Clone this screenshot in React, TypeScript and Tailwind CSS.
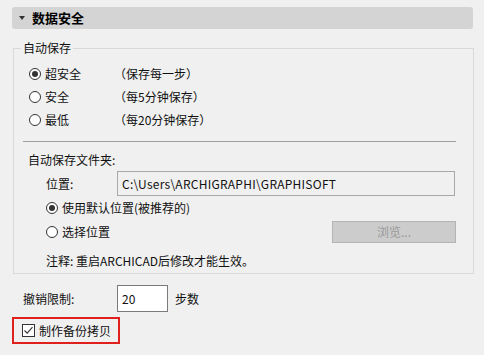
import React from "react";

const Radio: React.FC<{ checked?: boolean }> = ({ checked }) => (
  <span className="w-[12px] h-[12px] rounded-full border border-[#333] bg-white flex items-center justify-center shrink-0">
    {checked && <span className="w-[6px] h-[6px] rounded-full bg-[#333]" />}
  </span>
);

const App: React.FC = () => {
  const rows = [
    { label: "超安全", desc: "（保存每一步）", checked: true },
    { label: "安全", desc: "（每5分钟保存）", checked: false },
    { label: "最低", desc: "（每20分钟保存）", checked: false },
  ];
  return (
    <div className="w-[484px] h-[355px] bg-[#f0f0f0] text-[12px] leading-[16px] text-[#111] font-['Noto_Sans_CJK_SC',sans-serif] overflow-hidden">
      <div className="mx-[12px] mt-[7px] h-[22px] w-[461px] rounded-[3px] bg-[#d4d4d4] flex items-center pl-[7px]">
        <span className="w-0 h-0 border-l-[3px] border-r-[3px] border-t-[4px] border-l-transparent border-r-transparent border-t-[#333]" />
        <span className="ml-[7px] font-bold text-[13px] text-black">数据安全</span>
      </div>

      <fieldset className="ml-[13px] mt-[11px] w-[461px] border border-[#d9d9d9] p-0 m-0">
        <legend className="ml-[7px] px-[2px] leading-[16px]">自动保存</legend>
        <div className="pt-[6px] pb-[4px]">
          {rows.map((r, i) => (
            <div key={i} className="h-[23px] flex items-center pl-[15px]">
              <Radio checked={r.checked} />
              <span className="ml-[4px] w-[69px]">{r.label}</span>
              <span>{r.desc}</span>
            </div>
          ))}
          <div className="ml-[9px] mr-[17px] mt-[10px] h-px bg-[#a0a0a0]" />
          <div className="mt-[10px] pl-[14px]">自动保存文件夹:</div>
          <div className="mt-[3px] pl-[32px] flex items-center">
            <span className="w-[71px]">位置:</span>
            <div className="w-[338px] h-[25px] border border-[#a8a8a8] flex items-center pl-[4px] tracking-[0.25px]">
              C:\Users\ARCHIGRAPHI\GRAPHISOFT
            </div>
          </div>
          <div className="h-[23px] pl-[32px] flex items-center">
            <Radio checked />
            <span className="ml-[4px]">使用默认位置(被推荐的)</span>
          </div>
          <div className="mt-[1px] h-[23px] pl-[32px] flex items-center">
            <Radio />
            <span className="ml-[4px]">选择位置</span>
            <div className="ml-auto mr-[17px] w-[124px] h-[22px] bg-[#cccccc] border border-[#b4b4b4] flex items-center justify-center text-[#9a9a9a]">
              浏览...
            </div>
          </div>
          <div className="mt-[10px] pl-[32px]">注释: 重启ARCHICAD后修改才能生效。</div>
        </div>
      </fieldset>

      <div className="mt-[11px] pl-[23px] flex items-center">
        <span className="w-[94px]">撤销限制:</span>
        <div className="w-[51px] h-[27px] bg-white border border-[#7a7a7a] flex items-center pl-[4px]">20</div>
        <span className="ml-[7px]">步数</span>
      </div>

      <div className="ml-[12px] mt-[5px] w-[108px] h-[27px] border-2 border-[#e0201c] flex items-center pl-[8px]">
        <span className="w-[13px] h-[13px] border border-[#333] bg-white flex items-center justify-center">
          <svg width="11" height="11" viewBox="0 0 11 11">
            <path d="M1.5 5.5 L4.2 8.2 L9.5 2.2" fill="none" stroke="#333" strokeWidth="1.1" />
          </svg>
        </span>
        <span className="ml-[4px]">制作备份拷贝</span>
      </div>
    </div>
  );
};

export default App;
